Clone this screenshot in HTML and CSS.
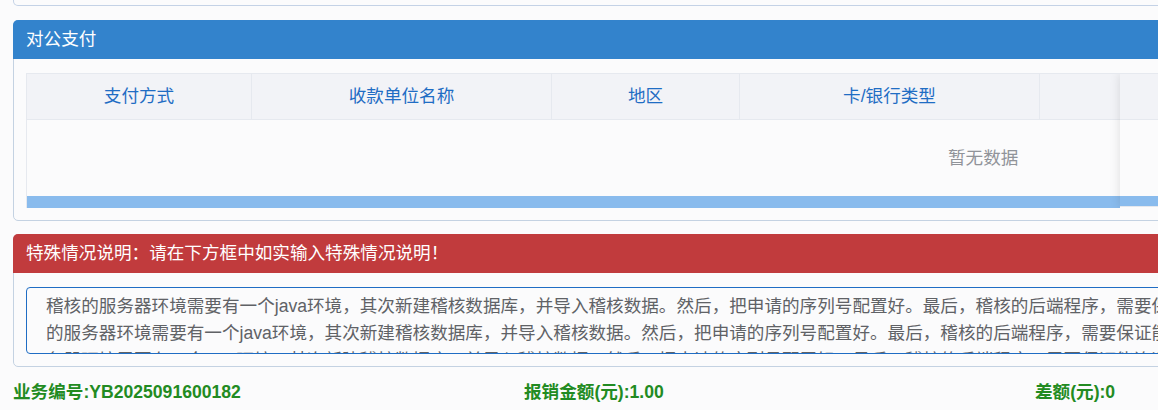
FILE: index.html
```html
<!DOCTYPE html>
<html lang="zh-CN">
<head>
    <meta charset="UTF-8">
    <meta name="viewport" content="width=device-width, initial-scale=1.0">
    <title>报销单</title>
    <link rel="stylesheet" href="styles.css">
</head>
<body>
    <div class="page">
        <div class="prev-panel"></div>

        <div class="panel">
            <div class="panel-heading heading-blue">对公支付</div>
            <div class="panel-body">
                <div class="table">
                    <div class="table-head">
                        <div class="th col-1">支付方式</div>
                        <div class="th col-2">收款单位名称</div>
                        <div class="th col-3">地区</div>
                        <div class="th col-4">卡/银行类型</div>
                        <div class="th col-5"></div>
                    </div>
                    <div class="table-empty">暂无数据</div>
                    <div class="table-scroll"></div>

                    <div class="table-fixed">
                        <div class="fixed-head"></div>
                        <div class="fixed-body"></div>
                        <div class="fixed-scroll"></div>
                    </div>
                </div>
            </div>
        </div>

        <div class="panel">
            <div class="panel-heading heading-red">特殊情况说明：请在下方框中如实输入特殊情况说明！</div>
            <div class="panel-body">
<textarea class="remark" wrap="off" readonly>稽核的服务器环境需要有一个java环境，其次新建稽核数据库，并导入稽核数据。然后，把申请的序列号配置好。最后，稽核的后端程序，需要保证能连通稽核数据库。
的服务器环境需要有一个java环境，其次新建稽核数据库，并导入稽核数据。然后，把申请的序列号配置好。最后，稽核的后端程序，需要保证能连通稽核数据库。稽核
务器环境需要有一个java环境，其次新建稽核数据库，并导入稽核数据。然后，把申请的序列号配置好。最后，稽核的后端程序，需要保证能连通稽核数据库。稽核的服</textarea>
            </div>
        </div>

        <div class="summary">
            <div>业务编号:YB2025091600182</div>
            <div>报销金额(元):1.00</div>
            <div>差额(元):0</div>
        </div>
    </div>
</body>
</html>
```

FILE: styles.css
```css
html, body {
    overflow: hidden;
}

body {
    font-family: "Liberation Sans", "Noto Sans CJK SC", sans-serif;
    font-size: 17.6px;
    background-color: #fbfbfc;
    margin: 0;
    padding: 0;
}

.page {
    width: 1533px;
    padding: 0 13px;
}

.prev-panel {
    height: 5px;
    border: 1px solid #c4d2e6;
    border-top: none;
    border-radius: 0 0 5px 5px;
}

.panel {
    margin-top: 13px;
    border: 1px solid #c4d2e2;
    border-radius: 5px;
    background-color: #fbfbfc;
}

.prev-panel + .panel {
    margin-top: 14px;
}

.panel-heading {
    margin: -1px -1px 0;
    height: 39px;
    line-height: 39px;
    padding: 0 13px;
    color: #fff;
    border-radius: 5px 5px 0 0;
}

.heading-blue {
    background-color: #3383cc;
}

.heading-red {
    background-color: #c13b3d;
}

.panel-body {
    padding: 14px 12px 12px;
}

/* table */
.table {
    position: relative;
    overflow: hidden;
    border-top: 1px solid #e6e9ef;
    border-left: 1px solid #e6e9ef;
}

.table-head {
    display: flex;
    height: 45px;
    background-color: #f2f3f7;
    border-bottom: 1px solid #e6e9ef;
}

.th {
    line-height: 45px;
    text-align: center;
    color: #1f6dc4;
    border-right: 1px solid #e6e9ef;
}

.col-1 { width: 224px; }
.col-2 { width: 299px; }
.col-3 { width: 187px; }
.col-4 { width: 299px; }
.col-5 { flex: 1; border-right: none; }

.table-empty {
    height: 76px;
    line-height: 76px;
    padding-left: 921px;
    color: #909399;
}

.table-scroll {
    height: 12px;
    background-color: #89bbed;
}

.table-fixed {
    position: absolute;
    top: 0;
    left: 1093px;
    right: 0;
    bottom: 0;
    background-color: #fbfbfc;
    box-shadow: 0 0 10px rgba(0, 0, 0, 0.12);
}

.fixed-head {
    height: 45px;
    background-color: #f2f3f7;
    border-bottom: 1px solid #e6e9ef;
}

.fixed-body {
    height: 76px;
}

.fixed-scroll {
    height: 10px;
    background-color: #89bbed;
    border-bottom: 1px solid #e4e7ed;
}

/* remark */
.remark {
    display: block;
    box-sizing: border-box;
    width: 100%;
    height: 67px;
    margin: 0;
    padding: 5px 19px;
    font-family: "Liberation Sans", "Noto Sans CJK SC", sans-serif;
    font-size: 17.6px;
    line-height: 27px;
    color: #606266;
    background-color: #fbfbfc;
    border: 1px solid #1f6dc4;
    border-radius: 4px;
    resize: none;
    overflow: hidden;
    white-space: pre;
    outline: none;
}

/* summary */
.summary {
    display: grid;
    grid-template-columns: repeat(3, 511px);
    padding-top: 13px;
    line-height: 25px;
    font-weight: bold;
    color: #228b22;
}
```
